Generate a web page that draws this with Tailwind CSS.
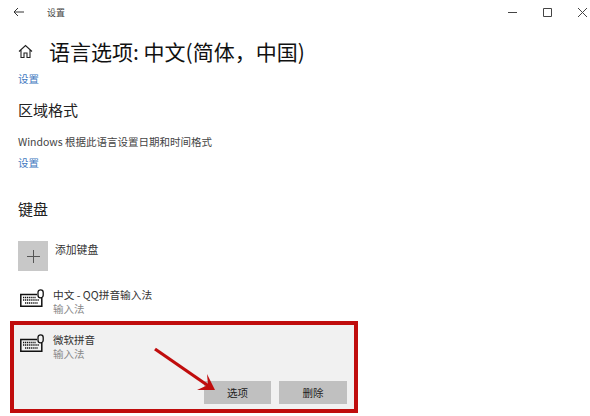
<!DOCTYPE html>
<html lang="zh-CN">
<head>
  <meta charset="UTF-8">
  <title>设置</title>
  <script src="https://cdn.jsdelivr.net/npm/@tailwindcss/browser@4"></script>
</head>
<body class="bg-white overflow-hidden font-['Noto_Sans_CJK_SC','Liberation_Sans',sans-serif] text-[#222]">
<div class="w-[590px] h-[416px] flex flex-col overflow-hidden">

  <!-- title bar -->
  <header class="h-[24px] flex items-center shrink-0">
    <svg class="ml-[13px] w-[11px] h-[10px]" viewBox="0 0 11 10" fill="none" stroke="#333" stroke-width="1"><path d="M11 5H1M5 1L1 5l4 4"/></svg>
    <span class="ml-[23px] text-[9px] leading-none text-[#444]">设置</span>
    <div class="ml-auto flex items-center gap-[26px] mr-[3px]">
      <svg class="w-[9px] h-[9px]" viewBox="0 0 9 9" fill="none" stroke="#444"><path d="M0 4.5h9"/></svg>
      <svg class="w-[9px] h-[9px]" viewBox="0 0 9 9" fill="none" stroke="#444"><path d="M.5.5h8v8h-8z"/></svg>
      <svg class="w-[9px] h-[9px]" viewBox="0 0 9 9" fill="none" stroke="#444"><path d="M0 0l9 9M9 0L0 9"/></svg>
    </div>
  </header>

  <main class="flex flex-col pl-[18px]">
    <div class="flex items-center h-[32px] mt-[11px]">
      <svg class="w-[15px] h-[15px]" viewBox="0 0 15 15" fill="none" stroke="#222" stroke-width="1.1"><path d="M1 7.5L7.5 1.5 14 7.5M3 6v7.5h3V9h3v4.5h3V6"/></svg>
      <h1 class="ml-[16px] text-[21px] leading-none text-[#111] whitespace-nowrap">语言选项: 中文(简体，中国)</h1>
    </div>
    <a href="#" class="mt-[4px] h-[16px] leading-[16px] text-[10.5px] text-[#3f78c0]">设置</a>

    <h2 class="mt-[11px] h-[24px] leading-[24px] text-[15px] text-[#222]">区域格式</h2>
    <p class="mt-[12px] h-[16px] leading-[16px] text-[10.5px] text-[#444]">Windows 根据此语言设置日期和时间格式</p>
    <a href="#" class="mt-[5px] h-[16px] leading-[16px] text-[10.5px] text-[#3f78c0]">设置</a>

    <h2 class="mt-[26px] h-[24px] leading-[24px] text-[15px] text-[#222]">键盘</h2>

    <div class="mt-[20px] flex items-start">
      <div class="w-[30px] h-[30px] bg-[#c8c8c8] flex items-center justify-center">
        <svg class="w-[13px] h-[13px]" viewBox="0 0 13 13" stroke="#555" stroke-width="1"><path d="M6.5 0v13M0 6.5h13"/></svg>
      </div>
      <span class="ml-[7px] mt-[1px] text-[10.8px] leading-[14px] text-[#333]">添加键盘</span>
    </div>

    <div class="mt-[17px] flex items-start h-[32px]">
      <svg class="ml-[2px] mt-[1px] w-[24px] h-[18px]" viewBox="0 0 24 18" fill="none" stroke="#111">
        <path d="M17 5.5H.8v11.7h21V9" stroke-width="1.5"/>
        <rect x="18" y=".8" width="5.2" height="8" rx="2.6" stroke-width="1.3"/>
        <path d="M3 8.5h13M3 11h16M5 14h13" stroke-width="1.5" stroke-dasharray="1.2 .7"/>
      </svg>
      <div class="ml-[9px] flex flex-col">
        <span class="text-[10.7px] leading-[14px] text-[#333] whitespace-nowrap">中文 - QQ拼音输入法</span>
        <span class="text-[10.5px] leading-[14px] text-[#888]">输入法</span>
      </div>
    </div>
  </main>

  <!-- selected keyboard -->
  <section class="ml-[10px] mt-[1px] w-[348px] h-[92px] border-[4px] border-[#c00d0d] bg-[#f1f1f1] relative shrink-0">
    <div class="flex items-start pt-[8px] pl-[6px]">
      <svg class="mt-[1px] w-[24px] h-[18px]" viewBox="0 0 24 18" fill="none" stroke="#111">
        <path d="M17 5.5H.8v11.7h21V9" stroke-width="1.5"/>
        <rect x="18" y=".8" width="5.2" height="8" rx="2.6" stroke-width="1.3"/>
        <path d="M3 8.5h13M3 11h16M5 14h13" stroke-width="1.5" stroke-dasharray="1.2 .7"/>
      </svg>
      <div class="ml-[9px] flex flex-col">
        <span class="text-[10.5px] leading-[14px] text-[#333]">微软拼音</span>
        <span class="text-[10.5px] leading-[14px] text-[#888]">输入法</span>
      </div>
    </div>
    <div class="flex justify-end gap-[8px] mt-[20px] pr-[7px]">
      <button class="w-[67px] h-[23px] bg-[#c0c0c0] text-[10.5px] text-[#222]">选项</button>
      <button class="w-[68px] h-[23px] bg-[#c0c0c0] text-[10.5px] text-[#222]">删除</button>
    </div>
    <!-- annotation arrow -->
    <svg class="absolute left-[140px] top-[22px] w-[70px] h-[50px]" viewBox="0 0 70 50">
      <path d="M1 2L56 40" stroke="#c00d0d" stroke-width="3.2" fill="none"/>
      <path d="M61 43L43 43 54 38 53 27z" fill="#c00d0d"/>
    </svg>
  </section>
</div>
</body>
</html>
